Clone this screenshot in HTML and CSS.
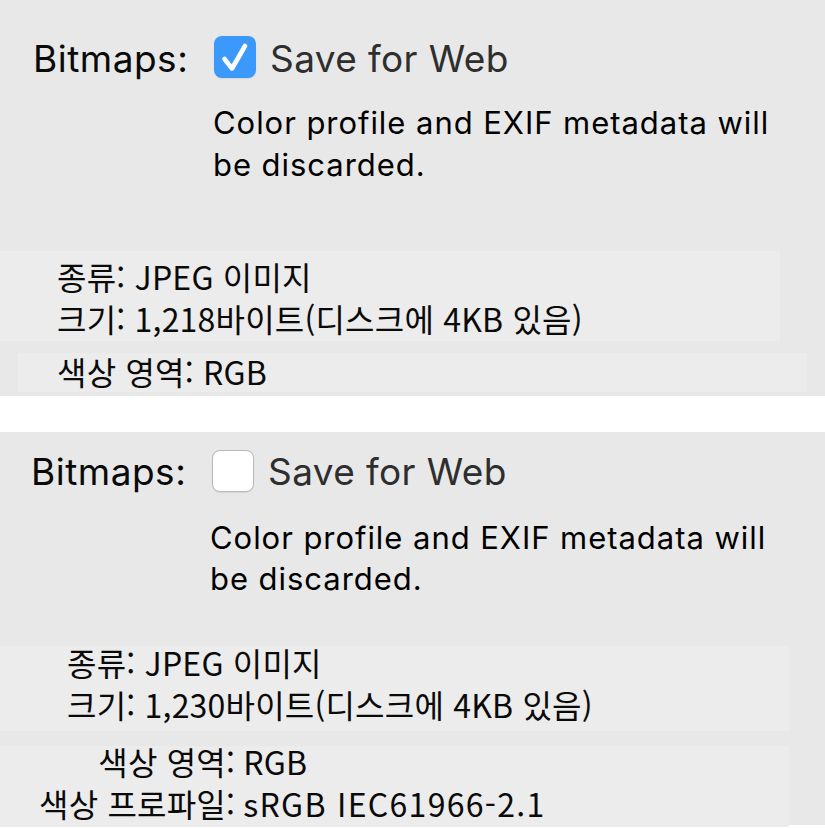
FILE: index.html
```html
<!DOCTYPE html>
<html lang="ko">
<head>
<meta charset="utf-8">
<title>Bitmaps</title>
<link rel="stylesheet" href="styles.css">
</head>
<body>
<div class="panel panel-a">
  <div class="option-row">
    <span class="label">Bitmaps:</span>
    <span class="checkbox checked">
      <svg viewBox="0 0 42 42" width="42" height="42"><path d="M10.5 23 L18 32.5 L31 10" fill="none" stroke="#fff" stroke-width="4.6" stroke-linecap="round" stroke-linejoin="round"/></svg>
    </span>
    <span class="option-text">Save for Web</span>
  </div>
  <p class="desc">Color profile and EXIF metadata will<br>be discarded.</p>
  <div class="info info-main">
    <div class="info-line">종류: JPEG 이미지</div>
    <div class="info-line">크기: 1,218바이트(디스크에 4KB 있음)</div>
  </div>
  <div class="info info-color">
    <div class="info-line">색상 영역: RGB</div>
  </div>
</div>
<div class="gap"></div>
<div class="panel panel-b">
  <div class="option-row">
    <span class="label">Bitmaps:</span>
    <span class="checkbox"></span>
    <span class="option-text">Save for Web</span>
  </div>
  <p class="desc">Color profile and EXIF metadata will<br>be discarded.</p>
  <div class="info info-main">
    <div class="lines">
      <div class="info-line">종류: JPEG 이미지</div>
      <div class="info-line">크기: 1,230바이트(디스크에 4KB 있음)</div>
    </div>
  </div>
  <div class="info info-color">
    <div class="kv">
      <span class="k">색상 영역:</span><span class="v">RGB</span>
      <span class="k">색상 프로파일:</span><span class="v v-wide">sRGB IEC61966-2.1</span>
    </div>
  </div>
</div>
</body>
</html>
```

FILE: styles.css
```css
html, body {
  margin: 0;
  padding: 0;
  background: #ffffff;
}
body {
  width: 825px;
  height: 828px;
  overflow: hidden;
  font-family: "Inter", "Liberation Sans", sans-serif;
}
.panel {
  background: #e8e8e8;
  box-sizing: border-box;
  display: flex;
  flex-direction: column;
  align-items: flex-start;
}
.panel-a {
  height: 396px;
  padding-top: 36px;
}
.panel-b {
  height: 393px;
  padding-top: 18px;
}
.gap {
  height: 36px;
}
.option-row {
  display: flex;
  align-items: flex-start;
  font-size: 37px;
  line-height: 45px;
}
.panel-a .option-row { padding-left: 33px; }
.panel-b .option-row { padding-left: 31px; line-height: 43px; }
.label {
  width: 181px;
  color: #0a0a0a;
  letter-spacing: 0.5px;
}
.checkbox {
  width: 42px;
  height: 42px;
  box-sizing: border-box;
  border-radius: 8px;
  background: #ffffff;
  border: 1.5px solid #b9b9b9;
  box-shadow: 0 0.5px 1px rgba(0,0,0,0.08);
  flex: none;
  display: flex;
}
.checkbox.checked {
  background: #3b99fc;
  border: none;
}
.option-text {
  margin-left: 14px;
  color: #2e2e2e;
  letter-spacing: 0.4px;
}
.desc {
  margin: 0;
  font-size: 31px;
  letter-spacing: 0.95px;
  color: #000;
}
.panel-a .desc {
  margin: 21px 0 0 213px;
  line-height: 42px;
}
.panel-b .desc {
  margin: 24px 0 0 210px;
  line-height: 41px;
}
.info {
  background: #ececec;
  box-sizing: border-box;
  font-family: "Noto Sans CJK KR", "Noto Sans", sans-serif;
  font-size: 32px;
  letter-spacing: 0.2px;
  line-height: 42px;
  color: #0a0a0a;
  flex: none;
}
.panel-a .info-main {
  margin-top: 65px;
  width: 780px;
  height: 90px;
  padding: 4px 0 0 57px;
}
.panel-a .info-color {
  margin: 12px 0 0 18px;
  width: 789px;
  height: 39px;
  padding-left: 39px;
  line-height: 36px;
}
.panel-b .info-main {
  margin-top: 47px;
  width: 789px;
  height: 85px;
  padding-left: 67px;
}
.panel-b .info-main .lines {
  margin-top: -5px;
}
.panel-b .info-color {
  margin-top: 15px;
  width: 789px;
  height: 81px;
  padding-left: 39px;
}
.kv {
  display: grid;
  grid-template-columns: auto auto;
  justify-content: start;
  column-gap: 8px;
  margin-top: -6px;
}
.k { text-align: right; }
.v-wide { letter-spacing: 1.3px; }
```
